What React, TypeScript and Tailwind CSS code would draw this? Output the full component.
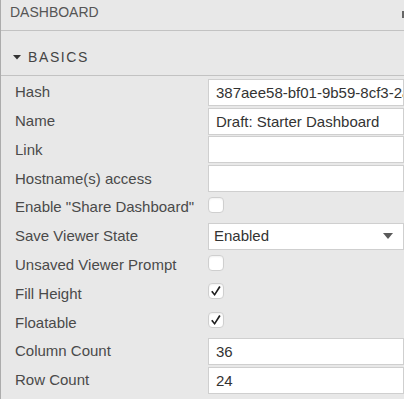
import React from "react";

const Check = () => (
  <svg width="16" height="16" viewBox="0 0 16 16" className="block">
    <path d="M2.4 8.8 L4 7.8 L6.3 10.8 L11.6 2.4 L13.3 3.4 L6.5 13.8 Z" fill="#1e1e1e" />
  </svg>
);

function Checkbox({ checked }: { checked?: boolean }) {
  return (
    <div className="w-[16px] h-[16px] mb-[5px] rounded-[4px] border border-[#cfcfcf] bg-white shadow-[inset_0_1px_2px_rgba(0,0,0,0.06)] flex items-center justify-center">
      {checked ? <Check /> : null}
    </div>
  );
}

function TextBox({ value }: { value?: string }) {
  return (
    <div className="h-[27px] w-full min-w-0 border border-[#cfcfcf] bg-white pl-[7px] text-[15px] leading-[25px] text-[#333] whitespace-nowrap overflow-hidden">
      {value}
    </div>
  );
}

function Row({ label, children }: { label: string; children: React.ReactNode }) {
  return (
    <div className="h-[28.8px] flex items-center">
      <div className="w-[207px] shrink-0 pl-[14px] text-[15px] text-[#4a4a4a] whitespace-nowrap">{label}</div>
      <div className="flex-1 min-w-0 flex items-center">{children}</div>
    </div>
  );
}

export default function App() {
  return (
    <div
      className="w-[404px] h-[399px] bg-[#e8e8e8] border-l border-[#acacac] overflow-hidden"
      style={{ fontFamily: '"Liberation Sans", Arial, sans-serif' }}
    >
      <div className="h-[31px] border-b border-[#c2c2c2] pl-[9px] pt-[4px] flex justify-between">
        <span className="text-[14px] leading-[16px] text-[#555]">DASHBOARD</span>
        <div className="w-[2px] h-[7px] mt-[7px] bg-[#666]" />
      </div>
      <div className="h-[45px] border-b border-[#c2c2c2] pl-[12px] pt-[18px] flex items-start">
        <svg width="8" height="16" viewBox="0 0 8 16" className="block mr-[7px]">
          <path d="M0 6 L8 6 L4 10.5 Z" fill="#333" />
        </svg>
        <span className="text-[14px] leading-[16px] tracking-[1.6px] text-[#444]">BASICS</span>
      </div>
      <div className="pt-[2px]">
        <Row label="Hash">
          <TextBox value="387aee58-bf01-9b59-8cf3-2a1b7c9d0e4f" />
        </Row>
        <Row label="Name">
          <TextBox value="Draft: Starter Dashboard" />
        </Row>
        <Row label="Link">
          <TextBox />
        </Row>
        <Row label="Hostname(s) access">
          <TextBox />
        </Row>
        <Row label={'Enable "Share Dashboard"'}>
          <Checkbox />
        </Row>
        <Row label="Save Viewer State">
          <div className="h-[27px] w-full border border-[#cfcfcf] bg-white pl-[5px] pr-[10px] flex items-center justify-between text-[15px] text-[#333]">
            <span>Enabled</span>
            <svg width="10" height="6" viewBox="0 0 10 6" className="block">
              <path d="M0 0 L10 0 L5 6 Z" fill="#5a5a5a" />
            </svg>
          </div>
        </Row>
        <Row label="Unsaved Viewer Prompt">
          <Checkbox />
        </Row>
        <Row label="Fill Height">
          <Checkbox checked />
        </Row>
        <Row label="Floatable">
          <Checkbox checked />
        </Row>
        <Row label="Column Count">
          <TextBox value="36" />
        </Row>
        <Row label="Row Count">
          <TextBox value="24" />
        </Row>
      </div>
    </div>
  );
}
